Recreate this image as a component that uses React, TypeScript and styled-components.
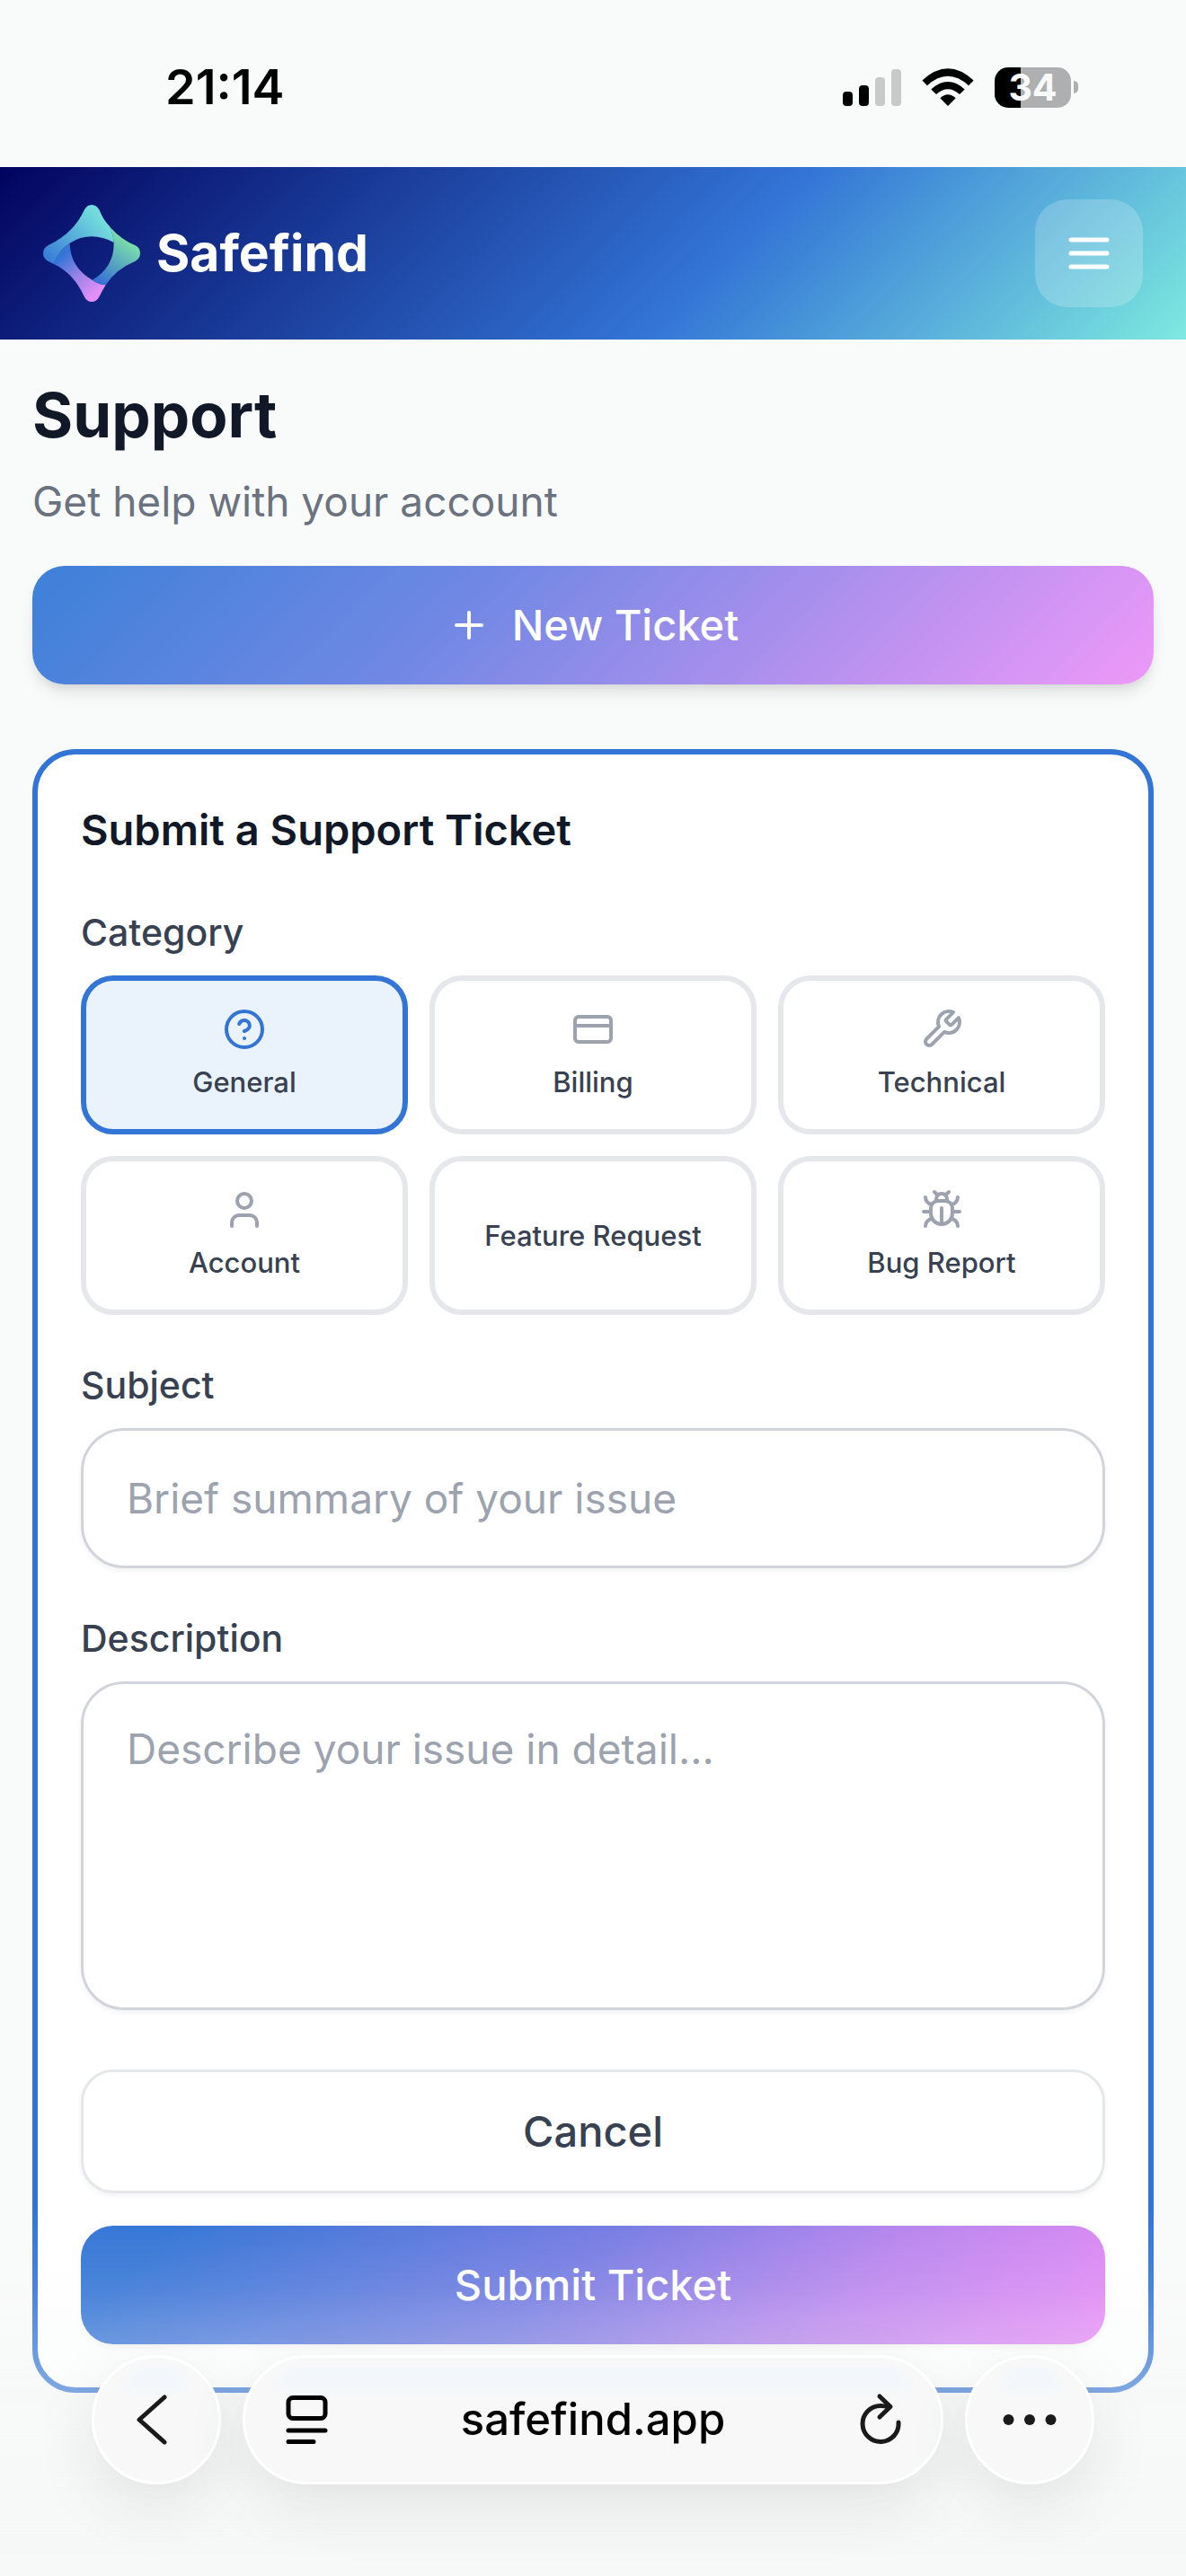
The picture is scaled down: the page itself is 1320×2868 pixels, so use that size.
import React, { useState } from "react";
import styled, { createGlobalStyle, css } from "styled-components";

const color = {
  page: "#f9fbfa",
  ink: "#111827",
  body: "#374151",
  muted: "#6b7280",
  faint: "#9ca3af",
  line: "#e5e7eb",
  fieldLine: "#d1d5db",
  blue: "#3375d6",
  blueTint: "#eaf2fc",
};

const GlobalStyle = createGlobalStyle`
  * { box-sizing: border-box; }
  body {
    margin: 0;
    background: ${color.page};
    color: ${color.ink};
    font-family: Inter, "Liberation Sans", sans-serif;
  }
  button, input, textarea { font-family: inherit; }
`;

const Page = styled.div`
  min-height: 100vh;
  padding-bottom: 204px;
`;

/* ---------- status bar ---------- */

const StatusBar = styled.div`
  display: flex;
  justify-content: space-between;
  align-items: center;
  height: 186px;
  padding: 8px 120px 0 184px;
  color: #000;
`;

const Clock = styled.time`
  font-size: 54px;
  line-height: 64px;
  font-weight: 600;
`;

const StatusIcons = styled.div`
  display: flex;
  align-items: center;
  gap: 23px;
`;

const Battery = styled.div`
  display: flex;
  align-items: center;
  gap: 3px;
`;

const BatteryCell = styled.div`
  display: flex;
  align-items: center;
  justify-content: center;
  width: 85px;
  height: 45px;
  border-radius: 15px;
  background: linear-gradient(90deg, #000 34%, #aeafb1 34%);
  color: ${color.page};
  font-size: 41px;
  line-height: 45px;
  font-weight: 700;
`;

const BatteryNub = styled.div`
  width: 5px;
  height: 14px;
  border-radius: 0 7px 7px 0;
  background: #aeafb1;
`;

/* ---------- app header ---------- */

const Header = styled.header`
  display: flex;
  align-items: center;
  justify-content: space-between;
  height: 192px;
  padding: 0 48px 0 42px;
  background: linear-gradient(135deg, #02045f 0%, ${color.blue} 60%, #7ee9df 100%);
`;

const Brand = styled.a`
  display: flex;
  align-items: center;
  gap: 12px;
  color: #fff;
  font-size: 57px;
  line-height: 84px;
  font-weight: 700;
  text-decoration: none;
`;

const MenuButton = styled.button`
  display: flex;
  align-items: center;
  justify-content: center;
  width: 120px;
  height: 120px;
  padding: 0;
  border: 0;
  border-radius: 36px;
  background: rgba(255, 255, 255, 0.2);
  color: #fff;
`;

/* ---------- page content ---------- */

const Main = styled.main`
  display: flex;
  flex-direction: column;
  padding: 36px;
`;

const Title = styled.h1`
  margin: 0 0 12px;
  font-size: 69px;
  line-height: 96px;
  font-weight: 700;
`;

const Subtitle = styled.p`
  margin: 0 0 36px;
  color: ${color.muted};
  font-size: 46px;
  line-height: 72px;
`;

const Button = styled.button<{ $kind: "primary" | "submit" | "outline" }>`
  display: flex;
  align-items: center;
  justify-content: center;
  gap: 24px;
  width: 100%;
  padding: 30px 48px;
  border: 0;
  border-radius: 36px;
  color: #fff;
  font-size: 47px;
  line-height: 72px;
  font-weight: 500;
  ${({ $kind }) =>
    $kind === "primary" &&
    css`
      background: linear-gradient(135deg, #3d80d8 0%, #7088e4 38%, #b891ef 73%, #ee99f8 100%);
      box-shadow: 0 12px 18px -3px rgba(0, 0, 0, 0.1), 0 6px 12px -6px rgba(0, 0, 0, 0.1);
    `}
  ${({ $kind }) =>
    $kind === "submit" &&
    css`
      background: linear-gradient(135deg, ${color.blue} 0%, ${color.blue} 8%, #737be2 46%, #b885ee 73%, #e78af6 100%);
      box-shadow: 0 3px 6px rgba(0, 0, 0, 0.05);
    `}
  ${({ $kind }) =>
    $kind === "outline" &&
    css`
      border: 3px solid ${color.line};
      background: #fff;
      color: ${color.body};
      box-shadow: 0 3px 6px rgba(0, 0, 0, 0.05);
    `}
`;

const Card = styled.form`
  display: flex;
  flex-direction: column;
  gap: 48px;
  margin-top: 72px;
  padding: 48px;
  border: 6px solid ${color.blue};
  border-radius: 48px;
  background: #fff;
`;

const CardTitle = styled.h2`
  margin: 0;
  font-size: 47px;
  line-height: 72px;
  font-weight: 600;
`;

const Field = styled.div`
  display: flex;
  flex-direction: column;
  gap: 18px;
`;

const labelText = css`
  color: ${color.body};
  font-size: 41px;
  line-height: 60px;
  font-weight: 500;
`;

const Label = styled.label`
  ${labelText}
`;

const GroupLabel = styled.span`
  ${labelText}
`;

const CategoryGrid = styled.div`
  display: grid;
  grid-template-columns: repeat(3, 1fr);
  gap: 24px;
`;

const CategoryButton = styled.button<{ $selected: boolean }>`
  display: flex;
  flex-direction: column;
  align-items: center;
  justify-content: center;
  gap: 12px;
  padding: 30px 12px;
  border: 6px solid ${({ $selected }) => ($selected ? color.blue : color.line)};
  border-radius: 36px;
  background: ${({ $selected }) => ($selected ? color.blueTint : "#fff")};
  color: ${color.body};
  font-size: 31px;
  line-height: 45px;
  font-weight: 500;

  svg {
    color: ${({ $selected }) => ($selected ? color.blue : color.faint)};
  }
`;

const control = css`
  width: 100%;
  padding: 36px 48px;
  border: 3px solid ${color.fieldLine};
  border-radius: 48px;
  background: #fff;
  box-shadow: 0 3px 6px rgba(0, 0, 0, 0.05);
  color: ${color.ink};
  font-size: 46px;
  line-height: 72px;
  outline: none;

  &::placeholder {
    color: ${color.faint};
    opacity: 1;
  }
`;

const TextInput = styled.input`
  ${control}
  height: 156px;
`;

const TextArea = styled.textarea`
  ${control}
  display: block;
  height: 366px;
  resize: none;
`;

const Actions = styled.div`
  display: flex;
  flex-direction: column;
  gap: 36px;
  padding-top: 18px;
`;

/* ---------- browser toolbar, floating over the page ---------- */

const Toolbar = styled.nav`
  position: fixed;
  left: 0;
  right: 0;
  bottom: 0;
  display: flex;
  gap: 24px;
  padding: 162px 102px 102px;
  background: linear-gradient(
    180deg,
    rgba(245, 247, 247, 0) 0%,
    rgba(245, 247, 247, 0.12) 22%,
    rgba(245, 247, 247, 0.38) 48%,
    rgba(245, 247, 247, 0.6) 100%
  );
`;

const glass = css`
  position: relative;
  display: flex;
  align-items: center;
  height: 144px;
  border: 3px solid #fff;
  border-radius: 72px;
  background: #f8f8f8;
  box-shadow: 0 24px 72px rgba(0, 0, 0, 0.09);
  color: #1a1a1a;

  &::before {
    content: "";
    position: absolute;
    top: 9px;
    left: 36px;
    right: 36px;
    height: 30px;
    border-radius: 30px 30px 6px 6px;
    background: #f3f7fb;
    filter: blur(3px);
  }

  svg {
    position: relative;
  }
`;

const RoundButton = styled.button`
  ${glass}
  justify-content: center;
  flex: none;
  width: 144px;
  padding: 0;
`;

const AddressBar = styled.div`
  ${glass}
  flex: 1;
  justify-content: space-between;
  padding: 0 42px;
`;

const BarButton = styled.button`
  position: relative;
  display: flex;
  padding: 0;
  border: 0;
  background: none;
  color: inherit;
`;

const Address = styled(BarButton)`
  color: #000;
  font-size: 49px;
  line-height: 72px;
  font-weight: 500;
`;

/* ---------- drawings ---------- */

const LineIcon = ({ size = 48, children }: { size?: number; children: React.ReactNode }) => (
  <svg
    width={size}
    height={size}
    viewBox="0 0 24 24"
    fill="none"
    stroke="currentColor"
    strokeWidth="2"
    strokeLinecap="round"
    strokeLinejoin="round"
    aria-hidden="true"
  >
    {children}
  </svg>
);

const HelpIcon = () => (
  <LineIcon>
    <circle cx="12" cy="12" r="10" />
    <path d="M9.09 9a3 3 0 0 1 5.83 1c0 2-3 3-3 3M12 17h.01" />
  </LineIcon>
);

const CardIcon = () => (
  <LineIcon>
    <rect x="2" y="5" width="20" height="14" rx="2" />
    <path d="M2 10h20" />
  </LineIcon>
);

const WrenchIcon = () => (
  <LineIcon>
    <path d="M14.7 6.3a1 1 0 0 0 0 1.4l1.6 1.6a1 1 0 0 0 1.4 0l3.77-3.77a6 6 0 0 1-7.94 7.94l-6.91 6.91a2.12 2.12 0 0 1-3-3l6.91-6.91a6 6 0 0 1 7.94-7.94l-3.76 3.76z" />
  </LineIcon>
);

const UserIcon = () => (
  <LineIcon>
    <circle cx="12" cy="7" r="4" />
    <path d="M19 21v-2a4 4 0 0 0-4-4H9a4 4 0 0 0-4 4v2" />
  </LineIcon>
);

const BugIcon = () => (
  <LineIcon>
    <path d="m8 2 1.88 1.88M14.12 3.88 16 2M9 7.13v-1a3.003 3.003 0 1 1 6 0v1" />
    <path d="M12 20c-3.3 0-6-2.7-6-6v-3a4 4 0 0 1 4-4h4a4 4 0 0 1 4 4v3c0 3.3-2.7 6-6 6M12 20v-9" />
    <path d="M6.53 9C4.6 8.8 3 7.1 3 5M6 13H2M3 21c0-2.1 1.7-3.9 3.8-4M20.97 5c0 2.1-1.6 3.8-3.5 4M22 13h-4M17.2 17c2.1.1 3.8 1.9 3.8 4" />
  </LineIcon>
);

const Logo = () => (
  <svg width="120" height="120" viewBox="6 6 360 360" aria-hidden="true">
    <defs>
      <linearGradient id="teal" gradientUnits="userSpaceOnUse" x1="215" y1="70" x2="50" y2="215">
        <stop offset="0" stopColor="#73dcdc" />
        <stop offset="1" stopColor="#3a7ed8" />
      </linearGradient>
      <linearGradient id="green" gradientUnits="userSpaceOnUse" x1="310" y1="150" x2="215" y2="285">
        <stop offset="0" stopColor="#79dcaa" />
        <stop offset="1" stopColor="#3670d4" />
      </linearGradient>
      <linearGradient id="pink" gradientUnits="userSpaceOnUse" x1="90" y1="195" x2="205" y2="320">
        <stop offset="0" stopColor="#3575d8" />
        <stop offset="0.5" stopColor="#9d83e6" />
        <stop offset="1" stopColor="#e38ff8" />
      </linearGradient>
    </defs>
    <path
      fill="url(#pink)"
      d="M60 222Q126 253 161 330Q170 348 186 348Q203 348 212 330Q222 310 233 292Q210 290 188 275Q114 232 113 152Q75 175 60 222Z"
    />
    <path
      fill="url(#green)"
      d="M245 95Q280 138 332 160Q348 168 348 186Q348 203 332 212Q265 240 233 292Q210 290 188 275Q262 232 260 150Q258 120 245 95Z"
    />
    <path
      fill="url(#teal)"
      d="M246 96Q225 75 212 42Q203 24 186 24Q170 24 161 42Q126 119 40 160Q24 170 24 186Q24 203 40 212L60 222Q75 175 113 152Q148 130 186 130Q224 130 260 150Q258 120 246 96Z"
    />
  </svg>
);

const SignalIcon = () => (
  <svg width="65" height="41" viewBox="0 0 65 41" aria-hidden="true">
    <rect x="0" y="25" width="11" height="16" rx="4" />
    <rect x="18" y="18" width="11" height="23" rx="4" />
    <rect x="36" y="9" width="11" height="32" rx="4" fill="#c8c9c9" />
    <rect x="54" y="0" width="11" height="41" rx="4" fill="#c8c9c9" />
  </svg>
);

const WifiIcon = () => (
  <svg width="58" height="42" viewBox="0 0 58 42" aria-hidden="true">
    <path d="M29 42 20.300 33.200Q29 25.200 37.700 33.200Z" />
    <path d="M10.300 23.400Q29 6.600 47.700 23.400L42 29Q29 17.400 16 29Z" />
    <path d="M.400 13.600Q29-13 57.600 13.600L52 19.200Q29-1.600 6 19.200Z" />
  </svg>
);

const BackIcon = () => (
  <svg width="60" height="60" viewBox="0 0 60 60" fill="none" stroke="currentColor" strokeWidth="5" strokeLinecap="round" strokeLinejoin="round" aria-hidden="true">
    <path d="M39 5 11 30 39 55" />
  </svg>
);

const ReaderIcon = () => (
  <svg width="52" height="56" viewBox="0 0 52 56" fill="none" stroke="#000" strokeWidth="5" strokeLinecap="round" aria-hidden="true">
    <rect x="6" y="3.500" width="41" height="23" rx="5" />
    <path d="M6 40h41M6 52.500h28" />
  </svg>
);

const ReloadIcon = () => (
  <svg width="52" height="60" viewBox="0 0 52 60" fill="none" stroke="currentColor" strokeWidth="5" strokeLinecap="round" strokeLinejoin="round" aria-hidden="true">
    <path d="M47 33A20 20 0 1 1 27 14.500Q32 14.500 36 16" />
    <path d="M26 4 38 15.500 26 27" />
  </svg>
);

const MoreIcon = () => (
  <svg width="60" height="12" viewBox="0 0 60 12" fill="currentColor" aria-hidden="true">
    <circle cx="6.500" cy="6" r="6" />
    <circle cx="30" cy="6" r="6" />
    <circle cx="53.500" cy="6" r="6" />
  </svg>
);

/* ---------- app ---------- */

const categories: { name: string; icon?: React.ReactNode }[] = [
  { name: "General", icon: <HelpIcon /> },
  { name: "Billing", icon: <CardIcon /> },
  { name: "Technical", icon: <WrenchIcon /> },
  { name: "Account", icon: <UserIcon /> },
  { name: "Feature Request" },
  { name: "Bug Report", icon: <BugIcon /> },
];

export default function App() {
  const [category, setCategory] = useState("General");

  return (
    <>
      <GlobalStyle />
      <Page>
        <StatusBar>
          <Clock>21:14</Clock>
          <StatusIcons>
            <SignalIcon />
            <WifiIcon />
            <Battery>
              <BatteryCell>34</BatteryCell>
              <BatteryNub />
            </Battery>
          </StatusIcons>
        </StatusBar>

        <Header>
          <Brand href="#">
            <Logo />
            Safefind
          </Brand>
          <MenuButton type="button" aria-label="Menu">
            <LineIcon size={60}>
              <path d="M4 6h16M4 12h16M4 18h16" />
            </LineIcon>
          </MenuButton>
        </Header>

        <Main>
          <Title>Support</Title>
          <Subtitle>Get help with your account</Subtitle>
          <Button type="button" $kind="primary">
            <LineIcon>
              <path d="M5 12h14M12 5v14" />
            </LineIcon>
            New Ticket
          </Button>

          <Card onSubmit={(event) => event.preventDefault()}>
            <CardTitle>Submit a Support Ticket</CardTitle>
            <Field role="group" aria-labelledby="category-label">
              <GroupLabel id="category-label">Category</GroupLabel>
              <CategoryGrid>
                {categories.map(({ name, icon }) => (
                  <CategoryButton
                    key={name}
                    type="button"
                    $selected={name === category}
                    aria-pressed={name === category}
                    onClick={() => setCategory(name)}
                  >
                    {icon}
                    {name}
                  </CategoryButton>
                ))}
              </CategoryGrid>
            </Field>
            <Field>
              <Label htmlFor="subject">Subject</Label>
              <TextInput id="subject" type="text" placeholder="Brief summary of your issue" />
            </Field>
            <Field>
              <Label htmlFor="description">Description</Label>
              <TextArea id="description" placeholder="Describe your issue in detail..." />
            </Field>
            <Actions>
              <Button type="button" $kind="outline">
                Cancel
              </Button>
              <Button type="submit" $kind="submit">
                Submit Ticket
              </Button>
            </Actions>
          </Card>
        </Main>
      </Page>

      <Toolbar aria-label="Browser">
        <RoundButton type="button" aria-label="Back">
          <BackIcon />
        </RoundButton>
        <AddressBar>
          <BarButton type="button" aria-label="Page menu">
            <ReaderIcon />
          </BarButton>
          <Address type="button">safefind.app</Address>
          <BarButton type="button" aria-label="Reload">
            <ReloadIcon />
          </BarButton>
        </AddressBar>
        <RoundButton type="button" aria-label="More">
          <MoreIcon />
        </RoundButton>
      </Toolbar>
    </>
  );
}
